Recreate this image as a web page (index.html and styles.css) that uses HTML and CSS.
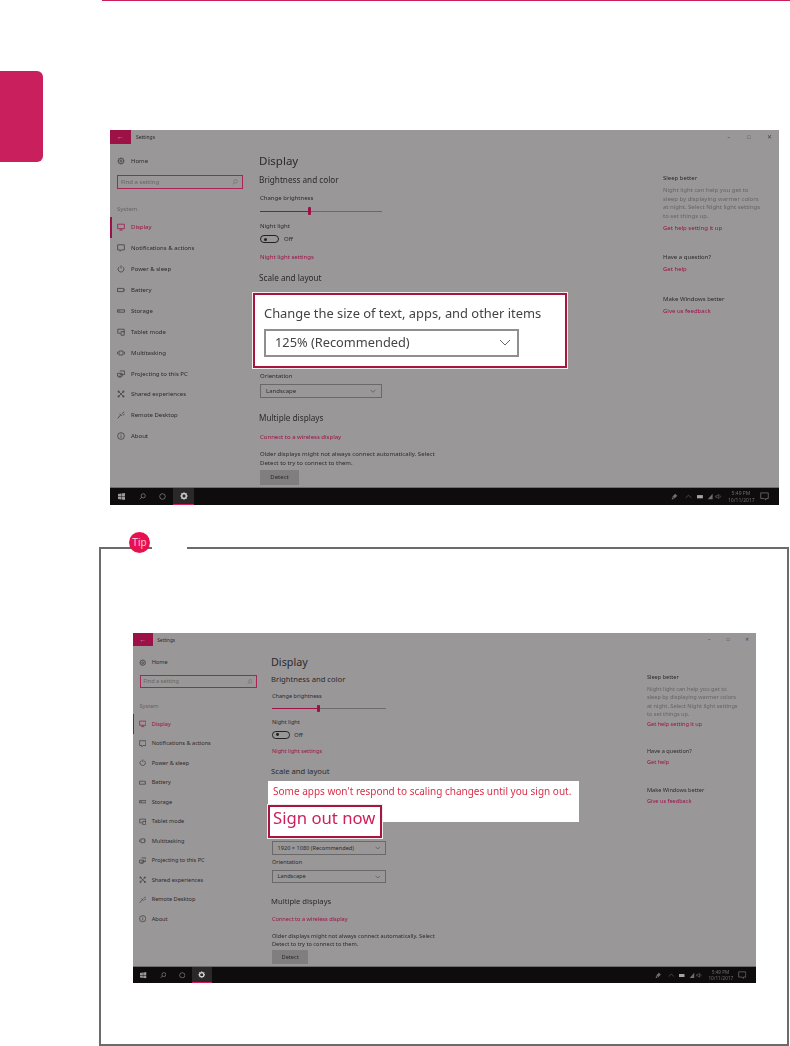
FILE: index.html
```html
<!DOCTYPE html>
<html lang="en">
<head>
    <meta charset="UTF-8">
    <meta name="viewport" content="width=device-width, initial-scale=1.0">
    <title>Display settings - Scale and layout</title>
    <link rel="stylesheet" href="styles.css">
</head>
<body>
    <!-- icons shared by both screenshots -->
    <svg class="icon-defs" width="0" height="0" aria-hidden="true">
        <symbol id="i-home" viewBox="0 0 10 10"><circle cx="5" cy="5" r="3.4"/><circle cx="5" cy="5" r="1.3"/><path d="M5 .6v1M5 8.4v1M.6 5h1M8.4 5h1M1.9 1.9l.7.7M7.4 7.4l.7.7M8.1 1.9l-.7.7M2.6 7.4l-.7.7"/></symbol>
        <symbol id="i-display" viewBox="0 0 10 10"><path d="M.8 1.5h8.4v5.6H.8zM5 7.1v1.6M3 8.9h4"/></symbol>
        <symbol id="i-notify" viewBox="0 0 10 10"><path d="M.8 1h8.4v6.4H5.6L4 9V7.4H.8z"/></symbol>
        <symbol id="i-power" viewBox="0 0 10 10"><path d="M5 .6v3.6M3 2.2a3.6 3.6 0 1 0 4 0"/></symbol>
        <symbol id="i-battery" viewBox="0 0 10 10"><path d="M.6 3h7.8v4H.6zM9.4 4.2v1.6"/></symbol>
        <symbol id="i-storage" viewBox="0 0 10 10"><path d="M.6 3.5h8.8v3H.6zM2 5h2"/></symbol>
        <symbol id="i-tablet" viewBox="0 0 10 10"><path d="M1 1.5h8v4M1 1.5v5h3M5 4.5h4v4.5H5z"/></symbol>
        <symbol id="i-multi" viewBox="0 0 10 10"><path d="M2.5 2.5h5v5h-5zM.6 3.5v3M9.4 3.5v3"/></symbol>
        <symbol id="i-project" viewBox="0 0 10 10"><path d="M3.5 1.2h6v4.6h-6M.6 4.2h5.8v3.6H.6zM2 9h3"/></symbol>
        <symbol id="i-shared" viewBox="0 0 10 10"><path d="M2 2l6 6M8 2L2 8"/><circle cx="2" cy="2" r=".9"/><circle cx="8" cy="2" r=".9"/><circle cx="2" cy="8" r=".9"/><circle cx="8" cy="8" r=".9"/></symbol>
        <symbol id="i-remote" viewBox="0 0 10 10"><path d="M1 9.2l3.6-4.4M4.6 4.8L3.4 3.4M4.6 4.8l1.5 1.5M6 3.4l3-2.2M7.4 5.2L9.4 4"/></symbol>
        <symbol id="i-about" viewBox="0 0 10 10"><circle cx="5" cy="5" r="4.2"/><path d="M5 4.4v2.8M5 2.6v.9"/></symbol>
        <symbol id="i-search" viewBox="0 0 10 10"><circle cx="6" cy="4" r="3"/><path d="M3.8 6.2L1 9"/></symbol>
        <symbol id="i-chevron" viewBox="0 0 12 7"><path d="M1 1l5 5 5-5"/></symbol>
        <symbol id="i-windows" viewBox="0 0 10 10"><path class="solid" d="M0 1.4l4.4-.6v3.9H0zM5 .7L10 0v4.7H5zM0 5.3h4.4v3.9L0 8.6zM5 5.3h5V10l-5-.7z"/></symbol>
        <symbol id="i-ring" viewBox="0 0 10 10"><circle cx="5" cy="5" r="4"/></symbol>
        <symbol id="i-gear" viewBox="0 0 10 10"><circle cx="5" cy="5" r="2.9" stroke-width="1.6"/><path stroke-width="1.3" d="M5 .4v1.4M5 8.2v1.4M.4 5h1.4M8.2 5h1.4M1.8 1.8l1 1M7.2 7.2l1 1M8.2 1.8l-1 1M2.8 7.2l-1 1"/></symbol>
        <symbol id="i-pen" viewBox="0 0 10 10"><path class="solid" d="M6 1l3 3-4 4-3-3zM1.6 5.8l2.6 2.6L1 9.4z"/></symbol>
        <symbol id="i-up" viewBox="0 0 10 10"><path d="M1 7l4-4 4 4"/></symbol>
        <symbol id="i-cell" viewBox="0 0 10 10"><path class="solid" d="M0 3h8.4v4.6H0z"/></symbol>
        <symbol id="i-net" viewBox="0 0 10 10"><path class="solid" d="M1 9L8 1v8z"/></symbol>
        <symbol id="i-vol" viewBox="0 0 10 10"><path d="M1 4h2l2.4-2v6L3 6H1zM7 3.4a2.4 2.4 0 0 1 0 3.2"/></symbol>
        <symbol id="i-action" viewBox="0 0 10 10"><path d="M.8 1h8.4v6.2H6.4V9L4.6 7.2H.8z"/></symbol>
    </svg>

    <div class="page">
        <div class="side-tab"></div>

        <main class="content">
            <div class="top-rule"></div>

            <section class="shot shot-large">
                <div class="window">
                    <div class="titlebar">
                        <span class="back-btn">&#8592;</span>
                        <span class="title-text">Settings</span>
                        <span class="win-controls"><span>&#8211;</span><span>&#9633;</span><span>&#10005;</span></span>
                    </div>
                    <div class="settings">
                        <nav class="sidebar">
                            <a class="nav-item nav-home"><svg><use href="#i-home"/></svg>Home</a>
                            <div class="search-box"><span>Find a setting</span><svg><use href="#i-search"/></svg></div>
                            <div class="nav-group">System</div>
                            <a class="nav-item active"><svg><use href="#i-display"/></svg>Display</a>
                            <a class="nav-item"><svg><use href="#i-notify"/></svg>Notifications &amp; actions</a>
                            <a class="nav-item"><svg><use href="#i-power"/></svg>Power &amp; sleep</a>
                            <a class="nav-item"><svg><use href="#i-battery"/></svg>Battery</a>
                            <a class="nav-item"><svg><use href="#i-storage"/></svg>Storage</a>
                            <a class="nav-item"><svg><use href="#i-tablet"/></svg>Tablet mode</a>
                            <a class="nav-item"><svg><use href="#i-multi"/></svg>Multitasking</a>
                            <a class="nav-item"><svg><use href="#i-project"/></svg>Projecting to this PC</a>
                            <a class="nav-item"><svg><use href="#i-shared"/></svg>Shared experiences</a>
                            <a class="nav-item"><svg><use href="#i-remote"/></svg>Remote Desktop</a>
                            <a class="nav-item"><svg><use href="#i-about"/></svg>About</a>
                        </nav>
                        <div class="main-col">
                            <h1>Display</h1>
                            <h2>Brightness and color</h2>
                            <div class="label label-first">Change brightness</div>
                            <div class="slider"><span class="slider-fill"></span><span class="slider-thumb"></span></div>
                            <div class="label label-night">Night light</div>
                            <div class="toggle-row"><span class="toggle"></span>Off</div>
                            <a class="link link-night">Night light settings</a>
                            <h2 class="h-scale">Scale and layout</h2>
                            <div class="scale-gap"></div>
                            <div class="label label-orient">Orientation</div>
                            <div class="select"><span>Landscape</span><svg><use href="#i-chevron"/></svg></div>
                            <h2 class="h-multi">Multiple displays</h2>
                            <a class="link link-connect">Connect to a wireless display</a>
                            <p class="hint">Older displays might not always connect automatically. Select<br>Detect to try to connect to them.</p>
                            <div class="detect-btn">Detect</div>
                        </div>
                        <aside class="right-col">
                            <div class="aside-title aside-first">Sleep better</div>
                            <p class="aside-text">Night light can help you get to<br>sleep by displaying warmer colors<br>at night. Select Night light settings<br>to set things up.</p>
                            <a class="link aside-link">Get help setting it up</a>
                            <div class="aside-title">Have a question?</div>
                            <a class="link aside-link">Get help</a>
                            <div class="aside-title aside-last">Make Windows better</div>
                            <a class="link aside-link">Give us feedback</a>
                        </aside>
                    </div>
                    <div class="taskbar">
                        <span class="task-btn"><svg><use href="#i-windows"/></svg></span>
                        <span class="task-btn"><svg><use href="#i-search"/></svg></span>
                        <span class="task-btn"><svg><use href="#i-ring"/></svg></span>
                        <span class="task-btn task-active"><svg><use href="#i-gear"/></svg></span>
                        <div class="tray">
                            <svg class="tray-pen"><use href="#i-pen"/></svg>
                            <svg class="tray-up"><use href="#i-up"/></svg>
                            <svg class="tray-cell"><use href="#i-cell"/></svg>
                            <svg class="tray-net"><use href="#i-net"/></svg>
                            <svg class="tray-vol"><use href="#i-vol"/></svg>
                            <span class="clock">5:49 PM<br>10/11/2017</span>
                            <svg class="tray-action"><use href="#i-action"/></svg>
                        </div>
                    </div>
                </div>

                <div class="callout callout-size">
                    <div class="callout-title">Change the size of text, apps, and other items</div>
                    <div class="callout-select"><span>125% (Recommended)</span><svg><use href="#i-chevron"/></svg></div>
                </div>
            </section>

            <section class="tip-box">
                <span class="tip-gap"></span>
                <span class="tip-badge">Tip</span>

                <div class="shot shot-small">
                    <div class="window">
                        <div class="titlebar">
                            <span class="back-btn">&#8592;</span>
                            <span class="title-text">Settings</span>
                            <span class="win-controls"><span>&#8211;</span><span>&#9633;</span><span>&#10005;</span></span>
                        </div>
                        <div class="settings">
                            <nav class="sidebar">
                                <a class="nav-item nav-home"><svg><use href="#i-home"/></svg>Home</a>
                                <div class="search-box"><span>Find a setting</span><svg><use href="#i-search"/></svg></div>
                                <div class="nav-group">System</div>
                                <a class="nav-item active"><svg><use href="#i-display"/></svg>Display</a>
                                <a class="nav-item"><svg><use href="#i-notify"/></svg>Notifications &amp; actions</a>
                                <a class="nav-item"><svg><use href="#i-power"/></svg>Power &amp; sleep</a>
                                <a class="nav-item"><svg><use href="#i-battery"/></svg>Battery</a>
                                <a class="nav-item"><svg><use href="#i-storage"/></svg>Storage</a>
                                <a class="nav-item"><svg><use href="#i-tablet"/></svg>Tablet mode</a>
                                <a class="nav-item"><svg><use href="#i-multi"/></svg>Multitasking</a>
                                <a class="nav-item"><svg><use href="#i-project"/></svg>Projecting to this PC</a>
                                <a class="nav-item"><svg><use href="#i-shared"/></svg>Shared experiences</a>
                                <a class="nav-item"><svg><use href="#i-remote"/></svg>Remote Desktop</a>
                                <a class="nav-item"><svg><use href="#i-about"/></svg>About</a>
                            </nav>
                            <div class="main-col">
                                <h1>Display</h1>
                                <h2>Brightness and color</h2>
                                <div class="label label-first">Change brightness</div>
                                <div class="slider"><span class="slider-fill"></span><span class="slider-thumb"></span></div>
                                <div class="label label-night">Night light</div>
                                <div class="toggle-row"><span class="toggle"></span>Off</div>
                                <a class="link link-night">Night light settings</a>
                                <h2 class="h-scale">Scale and layout</h2>
                                <div class="scale-gap scale-gap-short"></div>
                                <div class="select"><span>1920 &#215; 1080 (Recommended)</span><svg><use href="#i-chevron"/></svg></div>
                                <div class="label label-orient">Orientation</div>
                                <div class="select"><span>Landscape</span><svg><use href="#i-chevron"/></svg></div>
                                <h2 class="h-multi">Multiple displays</h2>
                                <a class="link link-connect">Connect to a wireless display</a>
                                <p class="hint">Older displays might not always connect automatically. Select<br>Detect to try to connect to them.</p>
                                <div class="detect-btn">Detect</div>
                            </div>
                            <aside class="right-col">
                                <div class="aside-title aside-first">Sleep better</div>
                                <p class="aside-text">Night light can help you get to<br>sleep by displaying warmer colors<br>at night. Select Night light settings<br>to set things up.</p>
                                <a class="link aside-link">Get help setting it up</a>
                                <div class="aside-title">Have a question?</div>
                                <a class="link aside-link">Get help</a>
                                <div class="aside-title aside-last">Make Windows better</div>
                                <a class="link aside-link">Give us feedback</a>
                            </aside>
                        </div>
                        <div class="taskbar">
                            <span class="task-btn"><svg><use href="#i-windows"/></svg></span>
                            <span class="task-btn"><svg><use href="#i-search"/></svg></span>
                            <span class="task-btn"><svg><use href="#i-ring"/></svg></span>
                            <span class="task-btn task-active"><svg><use href="#i-gear"/></svg></span>
                            <div class="tray">
                                <svg class="tray-pen"><use href="#i-pen"/></svg>
                                <svg class="tray-up"><use href="#i-up"/></svg>
                                <svg class="tray-cell"><use href="#i-cell"/></svg>
                                <svg class="tray-net"><use href="#i-net"/></svg>
                                <svg class="tray-vol"><use href="#i-vol"/></svg>
                                <span class="clock">5:49 PM<br>10/11/2017</span>
                                <svg class="tray-action"><use href="#i-action"/></svg>
                            </div>
                        </div>
                    </div>

                    <div class="callout callout-warning">Some apps won't respond to scaling changes until you sign out.</div>
                    <div class="callout callout-signout">Sign out now</div>
                </div>
            </section>
        </main>
    </div>
</body>
</html>
```

FILE: styles.css
```css
:root {
    --brand: #c91f5c;
    --accent: #9c1146;
    --window-bg: #9a9798;
    --text: #2c2a2b;
    --muted: #666465;
    --frame: #6b6b6b;
}

* {
    margin: 0;
    padding: 0;
    box-sizing: border-box;
}

html, body {
    background: #fff;
}

body {
    font-family: "Noto Sans", "Open Sans", sans-serif;
    overflow: hidden;
}

.icon-defs {
    display: block;
    height: 0;
}

symbol {
    fill: none;
}

.solid {
    fill: currentColor;
    stroke: none;
}

.page {
    display: flex;
    width: 790px;
    height: 1046px;
}

.side-tab {
    flex: none;
    width: 43px;
    height: 91px;
    margin-top: 71px;
    background: var(--brand);
    border-radius: 0 6px 6px 0;
}

.content {
    flex: 1;
    margin-left: 56px;
    min-width: 0;
}

.top-rule {
    height: 1px;
    margin-left: 3px;
    background: var(--brand);
}

/* screenshots */
.shot {
    position: relative;
}

.shot-large {
    width: 669px;
    height: 375px;
    margin: 129px 0 0 11px;
}

.shot-small {
    width: 623px;
    height: 350px;
}

.window {
    display: flex;
    flex-direction: column;
    width: 669px;
    height: 375px;
    background: var(--window-bg);
    color: var(--text);
    font-size: 6px;
    filter: blur(0.45px);
}

.shot-small .window {
    zoom: 0.934;
    width: 667px;
}

.shot-small .sidebar {
    width: 147.8px;
}

.shot-small .main-col {
    width: 402.5px;
}

.window svg {
    stroke: currentColor;
    stroke-width: 0.9;
}

.titlebar {
    flex: none;
    display: flex;
    align-items: center;
    height: 14px;
}

.back-btn {
    width: 21px;
    height: 14px;
    background: var(--accent);
    color: #d8a0b5;
    font-size: 7px;
    line-height: 14px;
    text-align: center;
}

.title-text {
    margin-left: 5px;
    font-size: 5px;
}

.win-controls {
    display: flex;
    margin-left: auto;
    color: #444;
    font-size: 5.5px;
}

.win-controls span {
    width: 20px;
    text-align: center;
}

.settings {
    flex: 1;
    display: flex;
    min-height: 0;
}

/* left nav */
.sidebar {
    flex: none;
    width: 149px;
    padding-top: 7px;
}

.nav-item {
    display: flex;
    align-items: center;
    gap: 6px;
    height: 20.9px;
    padding-left: 5px;
    border-left: 2px solid transparent;
}

.nav-item svg {
    flex: none;
    width: 8px;
    height: 8px;
    color: #3a3839;
}

.nav-item.active {
    border-left-color: var(--accent);
    color: var(--accent);
}

.nav-item.active svg {
    color: var(--accent);
}

.search-box {
    display: flex;
    align-items: center;
    justify-content: space-between;
    width: 126px;
    height: 14px;
    margin: 3px 0 0 7px;
    padding: 0 4px 0 3px;
    border: 1.5px solid #a82557;
    color: var(--muted);
}

.search-box svg {
    width: 6px;
    height: 6px;
}

.nav-group {
    height: 12px;
    margin: 14px 0 2px 7px;
    color: var(--muted);
    line-height: 12px;
}

/* middle column */
.main-col {
    flex: none;
    width: 404px;
    padding: 8px 0 0 1px;
}

h1 {
    margin-left: -1px;
    font-size: 11.5px;
    font-weight: 400;
    line-height: 18px;
}

h2 {
    margin: 3px 0 0 -1px;
    font-size: 8.2px;
    font-weight: 400;
    line-height: 14px;
}

.label,
.link,
.hint {
    display: block;
    line-height: 10px;
}

.link {
    color: var(--accent);
}

.label-first {
    margin-top: 6px;
}

.slider {
    position: relative;
    width: 122px;
    height: 8px;
    margin-top: 4px;
    background: linear-gradient(#6a6869, #6a6869) center / 100% 1px no-repeat;
}

.slider-fill {
    position: absolute;
    top: 3.5px;
    left: 0;
    width: 49px;
    height: 1px;
    background: var(--accent);
}

.slider-thumb {
    position: absolute;
    top: 0;
    left: 48px;
    width: 3px;
    height: 8px;
    border-radius: 1px;
    background: var(--accent);
}

.label-night {
    margin-top: 6px;
}

.toggle-row {
    display: flex;
    align-items: center;
    gap: 5px;
    height: 8px;
    margin-top: 4px;
}

.toggle {
    position: relative;
    width: 19px;
    height: 8px;
    border: 1px solid #222;
    border-radius: 4px;
}

.toggle::before {
    content: "";
    position: absolute;
    top: 1.5px;
    left: 3px;
    width: 3px;
    height: 3px;
    border-radius: 50%;
    background: #222;
}

.link-night {
    margin-top: 9px;
}

.h-scale {
    margin-top: 9px;
}

/* room for the part of the page the callouts sit on */
.scale-gap {
    height: 82.5px;
}

.scale-gap-short {
    height: 65px;
}

.label-orient {
    margin-top: 3px;
}

.select {
    display: flex;
    align-items: center;
    justify-content: space-between;
    width: 122px;
    height: 14.5px;
    margin-top: 3px;
    padding: 0 5px;
    border: 1.5px solid #6a6869;
}

.select svg {
    width: 6px;
    height: 4px;
}

.h-multi {
    margin-top: 13px;
}

.link-connect {
    margin-top: 7px;
}

.hint {
    margin-top: 8px;
    letter-spacing: 0.03px;
    line-height: 9px;
}

.detect-btn {
    width: 39px;
    height: 15px;
    margin-top: 2px;
    background: #807e7f;
    line-height: 15px;
    text-align: center;
}

/* right column */
.right-col {
    flex: none;
    width: 116px;
}

.aside-title {
    margin-top: 19px;
    line-height: 10px;
}

.aside-first {
    margin-top: 29px;
}

.aside-last {
    margin-top: 20px;
}

.aside-text {
    margin-top: 3px;
    color: var(--muted);
    line-height: 8.7px;
}

.aside-link {
    margin-top: 2px;
}

/* taskbar */
.taskbar {
    flex: none;
    display: flex;
    height: 18px;
    padding-left: 1px;
    border-top: 1px solid #6d6b6c;
    background: #0e0c0d;
    color: #9a9899;
}

.task-btn {
    display: flex;
    align-items: center;
    justify-content: center;
    width: 20.8px;
}

.task-btn svg {
    width: 7px;
    height: 7px;
}

.task-active {
    border-bottom: 1px solid var(--brand);
    background: #2a2829;
    color: #ddd;
}

.task-active svg {
    width: 8px;
    height: 8px;
}

.tray {
    display: flex;
    align-items: center;
    margin-left: auto;
    padding-right: 10px;
    color: #6f6d6e;
}

.tray svg {
    width: 7px;
    height: 7px;
}

.tray .tray-up {
    margin-left: 7px;
}

.tray .tray-cell {
    margin-left: 5px;
    color: #a5a3a4;
}

.tray .tray-net {
    margin-left: 3px;
}

.tray .tray-vol {
    margin-left: 1px;
}

.tray .tray-action {
    width: 9px;
    height: 9px;
    margin-left: 6px;
}

.clock {
    width: 26px;
    margin-left: 6px;
    font-size: 5px;
    line-height: 7px;
    text-align: center;
    white-space: nowrap;
}

/* highlighted bits over the screenshots */
.callout {
    position: absolute;
    background: #fff;
    filter: blur(0.35px);
    white-space: nowrap;
}

.callout-size {
    top: 163px;
    left: 143px;
    width: 314px;
    height: 75px;
    padding: 8px 0 0 9px;
    border: 2px solid #a8153f;
    outline: 1px solid #eee;
    color: #444;
}

.callout-title {
    font-size: 12.9px;
    line-height: 20px;
}

.callout-select {
    display: flex;
    align-items: center;
    justify-content: space-between;
    width: 255px;
    height: 28px;
    margin-top: 6px;
    padding: 0 6px 2px 9px;
    border: 2px solid #8f8f8f;
    font-size: 12.8px;
}

.callout-select svg {
    width: 12px;
    height: 7px;
    fill: none;
    stroke: #666;
    stroke-width: 1;
}

.callout-warning {
    top: 148px;
    left: 135px;
    width: 311px;
    height: 41px;
    padding: 2px 0 0 5px;
    color: #d8304a;
    font-size: 10px;
    line-height: 17px;
}

.callout-signout {
    top: 172px;
    left: 135px;
    width: 114px;
    height: 33px;
    padding-left: 3px;
    border: 2px solid #a8153f;
    outline: 1px solid #eee;
    color: #cc1f5c;
    font-size: 16.7px;
    line-height: 21px;
}

/* tip frame */
.tip-box {
    position: relative;
    width: 690px;
    height: 499px;
    margin-top: 42px;
    padding: 84px 0 0 32px;
    border: 2px solid var(--frame);
}

.tip-gap {
    position: absolute;
    top: -2px;
    left: 51px;
    width: 35px;
    height: 2px;
    background: #fff;
}

.tip-badge {
    position: absolute;
    top: -17px;
    left: 28px;
    width: 21px;
    height: 21px;
    border-radius: 50%;
    background: #e8104f;
    color: #f7c4d2;
    font-size: 10px;
    line-height: 21px;
    text-align: center;
}
```
